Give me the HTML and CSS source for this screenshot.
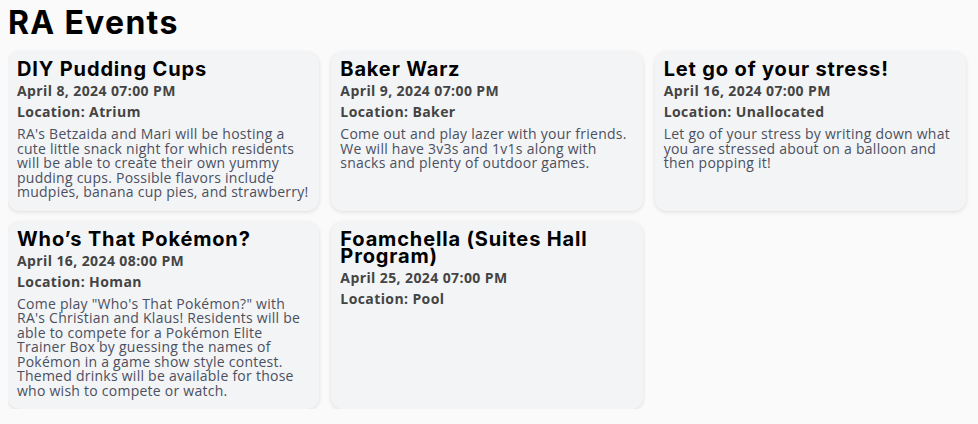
FILE: index.html
```html
<!DOCTYPE html>
<html lang="en">
<head>
<meta charset="utf-8">
<title>RA Events</title>
<link rel="stylesheet" href="styles.css">
</head>
<body>
<h1 class="page-title">RA Events</h1>
<div class="events">
  <div class="card">
    <h2 class="card-title">DIY Pudding Cups</h2>
    <div class="card-date">April 8, 2024 07:00 PM</div>
    <div class="card-loc">Location: Atrium</div>
    <p class="card-desc">RA's Betzaida and Mari will be hosting a cute little snack night for which residents will be able to create their own yummy pudding cups. Possible flavors include mudpies, banana cup pies, and strawberry!</p>
  </div>
  <div class="card">
    <h2 class="card-title">Baker Warz</h2>
    <div class="card-date">April 9, 2024 07:00 PM</div>
    <div class="card-loc">Location: Baker</div>
    <p class="card-desc">Come out and play lazer with your friends. We will have 3v3s and 1v1s along with snacks and plenty of outdoor games.</p>
  </div>
  <div class="card">
    <h2 class="card-title">Let go of your stress!</h2>
    <div class="card-date">April 16, 2024 07:00 PM</div>
    <div class="card-loc">Location: Unallocated</div>
    <p class="card-desc">Let go of your stress by writing down what you are stressed about on a balloon and then popping it!</p>
  </div>
  <div class="card">
    <h2 class="card-title">Who’s That Pokémon?</h2>
    <div class="card-date">April 16, 2024 08:00 PM</div>
    <div class="card-loc">Location: Homan</div>
    <p class="card-desc">Come play "Who's That Pokémon?" with RA's Christian and Klaus! Residents will be able to compete for a Pokémon Elite Trainer Box by guessing the names of Pokémon in a game show style contest. Themed drinks will be available for those who wish to compete or watch.</p>
  </div>
  <div class="card">
    <h2 class="card-title">Foamchella (Suites Hall Program)</h2>
    <div class="card-date">April 25, 2024 07:00 PM</div>
    <div class="card-loc">Location: Pool</div>
  </div>
</div>
</body>
</html>
```
FILE: styles.css
```css
html, body {
  background: #fafafa;
}
body {
  margin: 0 8px;
  font-family: "Open Sans", "Noto Sans", sans-serif;
  color: #000;
}
.page-title {
  font-family: Inter, "Noto Sans", sans-serif;
  font-weight: 700;
  font-size: 32px;
  line-height: 40px;
  margin: 3px 0 9px 0;
  letter-spacing: 1.3px;
}
.events {
  display: grid;
  grid-template-columns: repeat(3, 1fr);
  gap: 11px 12px;
  margin-right: 4px;
}
.card {
  background: #f3f4f6;
  border-radius: 12px;
  box-shadow: 0 1px 4px rgba(0, 0, 0, 0.12);
  padding: 9px 6px 11px 9px;
}
.card-title {
  font-family: Inter, "Noto Sans", sans-serif;
  font-weight: 700;
  font-size: 20px;
  line-height: 17px;
  letter-spacing: 0.85px;
  margin: 0 0 2px 0;
  color: #000;
}
.card-date, .card-loc {
  font-weight: 700;
  font-size: 14px;
  line-height: 21px;
  letter-spacing: 0.4px;
  color: #444;
}
.card-desc {
  margin: 5px 0 0 0;
  font-size: 14px;
  line-height: 14.5px;
  letter-spacing: 0.25px;
  color: #4b5060;
}
```
